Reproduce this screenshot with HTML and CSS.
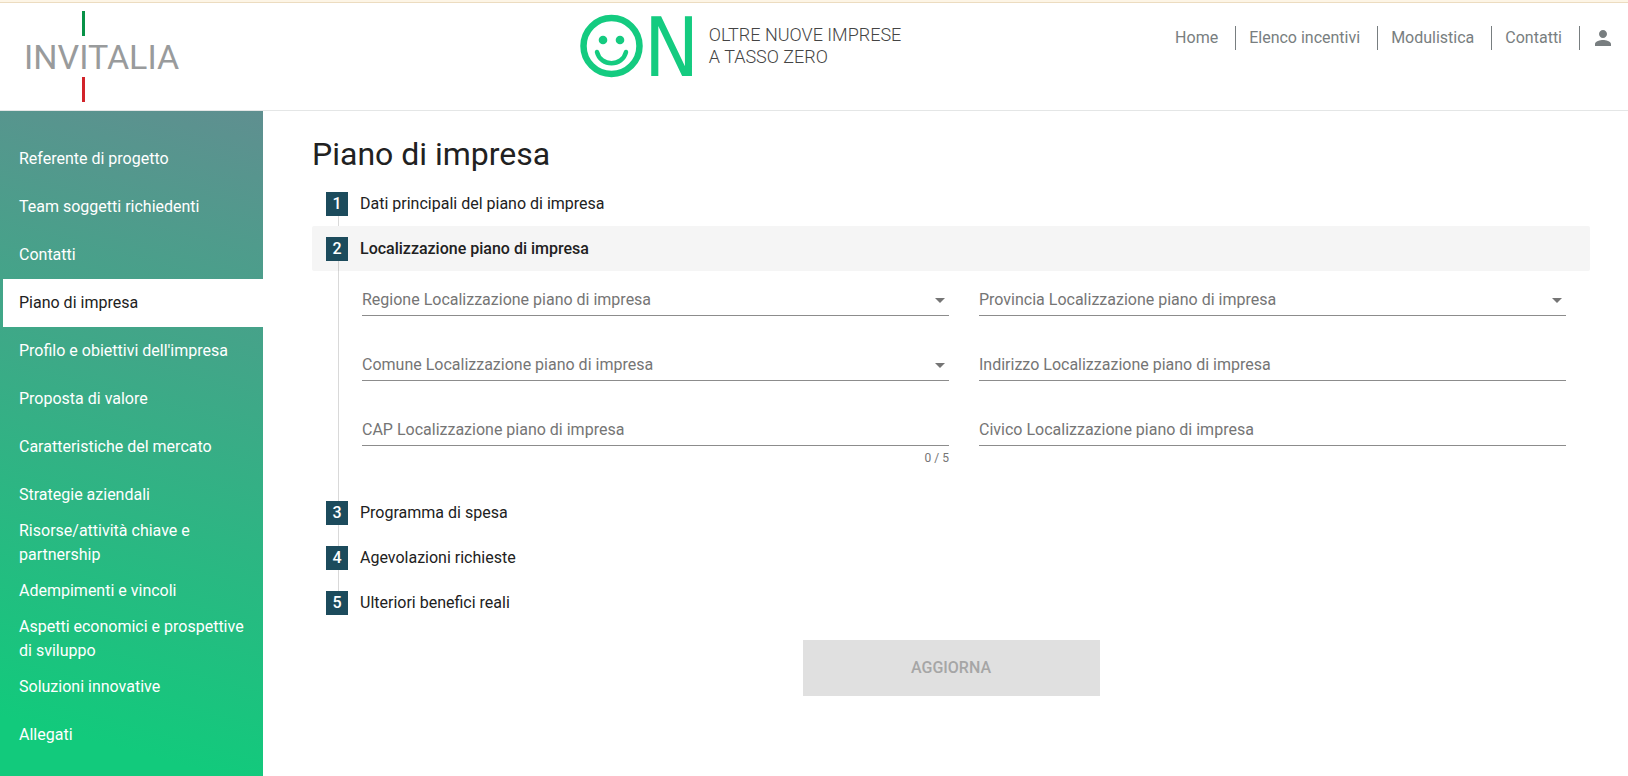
FILE: index.html
```html
<!DOCTYPE html>
<html lang="it">
<head>
<meta charset="utf-8">
<meta name="viewport" content="width=device-width, initial-scale=1">
<title>Piano di impresa - Invitalia</title>
<link rel="stylesheet" href="styles.css">
</head>
<body>
<div class="notice-strip"></div>
<header class="header">
  <a class="brand" href="#" aria-label="Invitalia">
    <svg class="brand-logo" width="152" height="91" viewBox="0 0 152 91">
      <rect x="58" y="0" width="3" height="25" fill="#079247"/>
      <text class="brand-text" x="0" y="58">INVITALIA</text>
      <rect x="58" y="66" width="3" height="25" fill="#d2232a"/>
    </svg>
  </a>
  <div class="measure">
    <svg class="on-logo" width="114" height="64" viewBox="0 0 114 64" role="img" aria-label="ON">
      <g fill="none" stroke="#14cb80">
        <circle cx="30.500" cy="32" r="28" stroke-width="6.500"/>
        <path d="M16 38C19.500 53 41.500 53 45 38" stroke-width="4.500" stroke-linecap="round"/>
      </g>
      <g fill="#14cb80">
        <circle cx="22" cy="26" r="4.300"/>
        <circle cx="39" cy="26" r="4.300"/>
        <text class="on-letter" x="63" y="62">N</text>
      </g>
    </svg>
    <p class="tagline">OLTRE NUOVE IMPRESE<br>A TASSO ZERO</p>
  </div>
  <nav class="top-nav" aria-label="Principale">
    <a class="top-link" href="#">Home</a>
    <a class="top-link" href="#">Elenco incentivi</a>
    <a class="top-link" href="#">Modulistica</a>
    <a class="top-link" href="#">Contatti</a>
    <button class="user-button" type="button" aria-label="Profilo utente">
      <svg width="24" height="24" viewBox="0 0 24 24" fill="#787e80"><path d="M12 12c2.210 0 4-1.790 4-4s-1.790-4-4-4-4 1.790-4 4 1.790 4 4 4zm0 2c-2.670 0-8 1.340-8 4v2h16v-2c0-2.660-5.330-4-8-4z"/></svg>
    </button>
  </nav>
</header>
<div class="layout">
  <nav class="sidebar" aria-label="Sezioni">
    <a class="side-link" href="#">Referente di progetto</a>
    <a class="side-link" href="#">Team soggetti richiedenti</a>
    <a class="side-link" href="#">Contatti</a>
    <a class="side-link side-link-active" href="#" aria-current="page">Piano di impresa</a>
    <a class="side-link" href="#">Profilo e obiettivi dell'impresa</a>
    <a class="side-link" href="#">Proposta di valore</a>
    <a class="side-link" href="#">Caratteristiche del mercato</a>
    <a class="side-link" href="#">Strategie aziendali</a>
    <a class="side-link" href="#">Risorse/attività chiave e partnership</a>
    <a class="side-link" href="#">Adempimenti e vincoli</a>
    <a class="side-link" href="#">Aspetti economici e prospettive di sviluppo</a>
    <a class="side-link" href="#">Soluzioni innovative</a>
    <a class="side-link" href="#">Allegati</a>
  </nav>
  <main class="main">
    <h1 class="title">Piano di impresa</h1>
    <form class="form">
      <ol class="steps">
        <li class="step">
          <button class="step-header" type="button"><span class="step-number">1</span>Dati principali del piano di impresa</button>
        </li>
        <li class="step">
          <button class="step-header step-header-active" type="button" aria-expanded="true"><span class="step-number">2</span>Localizzazione piano di impresa</button>
          <div class="fields">
            <div class="field">
              <select class="control" id="regione"><option value=""></option></select>
              <label class="label" for="regione">Regione Localizzazione piano di impresa</label>
              <svg class="arrow" width="10" height="5" viewBox="0 0 10 5"><path d="M0 0h10L5 5z" fill="#757575"/></svg>
            </div>
            <div class="field">
              <select class="control" id="provincia"><option value=""></option></select>
              <label class="label" for="provincia">Provincia Localizzazione piano di impresa</label>
              <svg class="arrow" width="10" height="5" viewBox="0 0 10 5"><path d="M0 0h10L5 5z" fill="#757575"/></svg>
            </div>
            <div class="field">
              <select class="control" id="comune"><option value=""></option></select>
              <label class="label" for="comune">Comune Localizzazione piano di impresa</label>
              <svg class="arrow" width="10" height="5" viewBox="0 0 10 5"><path d="M0 0h10L5 5z" fill="#757575"/></svg>
            </div>
            <div class="field">
              <input class="control" id="indirizzo" type="text">
              <label class="label" for="indirizzo">Indirizzo Localizzazione piano di impresa</label>
            </div>
            <div class="field">
              <input class="control" id="cap" type="text" maxlength="5" aria-describedby="cap-count">
              <label class="label" for="cap">CAP Localizzazione piano di impresa</label>
              <span class="hint" id="cap-count">0 / 5</span>
            </div>
            <div class="field">
              <input class="control" id="civico" type="text">
              <label class="label" for="civico">Civico Localizzazione piano di impresa</label>
            </div>
          </div>
        </li>
        <li class="step">
          <button class="step-header" type="button"><span class="step-number">3</span>Programma di spesa</button>
        </li>
        <li class="step">
          <button class="step-header" type="button"><span class="step-number">4</span>Agevolazioni richieste</button>
        </li>
        <li class="step">
          <button class="step-header" type="button"><span class="step-number">5</span>Ulteriori benefici reali</button>
        </li>
      </ol>
      <button class="submit" type="submit" disabled>AGGIORNA</button>
    </form>
  </main>
</div>
</body>
</html>
```
FILE: styles.css
```css
* {
  box-sizing: border-box;
}

body {
  display: flex;
  flex-direction: column;
  min-height: 100vh;
  margin: 0;
  background: #fff;
  color: #212121;
  font-family: Roboto, "Liberation Sans", sans-serif;
  font-size: 16px;
  line-height: 24px;
}

button,
input,
select {
  font: inherit;
  color: inherit;
}

.notice-strip {
  height: 3px;
  background: #fdf5e6;
  border-bottom: 1px solid #ecdcc0;
}

.header {
  display: grid;
  grid-template-columns: 35% 1fr auto;
  align-items: start;
  padding: 8px 13px 8px 24px;
  border-bottom: 1px solid #e4e6e6;
}

.brand-logo,
.on-logo {
  display: block;
  overflow: visible;
}

.brand-text {
  fill: #999b9c;
  font-size: 34px;
}

.measure {
  display: flex;
  gap: 14px;
  padding-top: 3px;
}

.on-letter {
  font-family: "DejaVu Sans Condensed", "DejaVu Sans", sans-serif;
  font-size: 82px;
  font-stretch: condensed;
}

.tagline {
  margin: 10px 0 0;
  color: #444;
  font-size: 18px;
  font-weight: 300;
  line-height: 22px;
}

.top-nav {
  display: flex;
  align-items: center;
  padding-top: 15px;
}

.top-link {
  margin-right: 13px;
  padding-right: 17px;
  border-right: 1px solid #787e80;
  color: #787e80;
  text-decoration: none;
}

.user-button {
  display: flex;
  margin-left: -2px;
  padding: 0;
  border: 0;
  background: none;
}

.layout {
  display: flex;
  flex: 1;
}

.sidebar {
  flex: 0 0 263px;
  padding: 24px 0 16px;
  background: linear-gradient(195deg, #5f8f90 0%, #12ca7c 92%);
}

.side-link {
  display: flex;
  align-items: center;
  min-height: 48px;
  padding: 0 16px;
  border-left: 3px solid transparent;
  background-clip: padding-box;
  color: #fff;
  text-decoration: none;
}

.side-link-active {
  background-color: #fff;
  color: #212121;
}

.main {
  flex: 1;
  min-width: 0;
  padding: 24px 38px 48px 49px;
}

.title {
  margin: 0 0 8px;
  font-size: 32px;
  font-weight: 400;
  line-height: 38px;
}

.form {
  display: flex;
  flex-direction: column;
  align-items: center;
  gap: 15px;
}

.steps {
  align-self: stretch;
  margin: 0;
  padding: 0;
  list-style: none;
}

.step {
  position: relative;
}

.step:not(:last-child)::after {
  content: "";
  position: absolute;
  top: 35px;
  bottom: -11px;
  left: 26px;
  width: 1px;
  background: rgba(0, 0, 0, 0.15);
}

.step-header {
  display: flex;
  align-items: center;
  gap: 12px;
  width: 100%;
  height: 45px;
  padding: 0 14px;
  border: 0;
  border-radius: 2px;
  background: none;
  text-align: left;
}

.step-header-active {
  background: #f5f5f5;
  font-weight: 500;
}

.step-number {
  width: 22px;
  background: #1c4b5c;
  color: #fff;
  font-weight: 500;
  text-align: center;
}

.fields {
  display: grid;
  grid-template-columns: 1fr 1fr;
  column-gap: 30px;
  padding: 9px 24px 15px 50px;
}

.field {
  display: grid;
  grid-template-columns: 1fr auto;
  grid-template-rows: 36px 29px;
  align-items: center;
}

.control {
  grid-area: 1 / 1 / 2 / 3;
  width: 100%;
  height: 36px;
  padding: 4px 0 0;
  border: 0;
  border-bottom: 1px solid #8c8c8c;
  border-radius: 0;
  background: none;
  appearance: none;
}

.label {
  grid-area: 1 / 1;
  padding-top: 4px;
  color: #757575;
  pointer-events: none;
}

.arrow {
  grid-area: 1 / 2;
  margin: 4px 4px 0 0;
  pointer-events: none;
}

.hint {
  grid-area: 2 / 1 / 3 / 3;
  align-self: start;
  justify-self: end;
  color: #757575;
  font-size: 12px;
}

.submit {
  width: 297px;
  height: 56px;
  border: 0;
  background: #e0e0e0;
  color: #a6a6a6;
  font-weight: 500;
}
```
